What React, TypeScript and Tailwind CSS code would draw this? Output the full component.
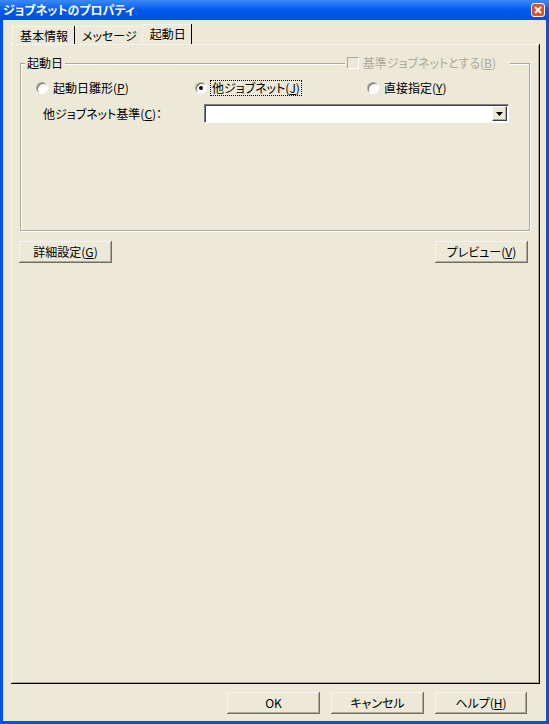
import React from 'react'

const font = { fontFamily: '"Noto Sans CJK JP", "Liberation Sans", sans-serif' }

const Radio: React.FC<{ checked?: boolean }> = ({ checked }) => (
  <span className="relative flex h-[12px] w-[12px] shrink-0 items-center justify-center rounded-full border border-t-[#ACA899] border-l-[#ACA899] border-b-white border-r-white bg-white shadow-[inset_1px_1px_0_#716F64]">
    {checked && <span className="h-[4px] w-[4px] rounded-full bg-black" />}
  </span>
)

const Btn: React.FC<{ label: string; u: string; w?: string }> = ({ label, u, w }) => (
  <div className={`flex h-[22px] ${w ?? 'w-[93px]'} border-b border-r border-b-[#716F64] border-r-[#716F64] bg-[#ECE9D8]`}>
    <div className="flex flex-1 items-center justify-center border-t border-l border-dotted border-t-white border-l-white border-b-0 border-r-0 shadow-[inset_-1px_-1px_0_#ACA899]">
      <span className="text-[12px] leading-[14px] text-black">
        {label}
        {u && (
          <>
            (<span className="underline">{u}</span>)
          </>
        )}
      </span>
    </div>
  </div>
)

const App: React.FC = () => {
  return (
    <div className="flex h-[724px] w-[549px] flex-col bg-[#0A4FDF] [font-feature-settings:'palt']" style={font}>
      {/* Title bar */}
      <div className="flex h-[20px] items-center justify-between bg-linear-to-b from-[#3B8AF7] via-[#0058EE] to-[#0050E0] pl-[3px] pr-[4px]">
        <span className="text-[12px] font-bold leading-[14px] text-white">ジョブネットのプロパティ</span>
        <div className="flex h-[14px] w-[14px] shrink-0 items-center justify-center rounded-[3px] border border-white bg-[#E0512A]">
          <svg width="8" height="8" viewBox="0 0 8 8">
            <path d="M1 1 L7 7 M7 1 L1 7" stroke="white" strokeWidth="2" />
          </svg>
        </div>
      </div>

      {/* Body */}
      <div className="mx-[3px] mb-[3px] flex flex-1 flex-col bg-[#ECE9D8]">
        {/* Tabs */}
        <div className="ml-[9px] mt-[4px] flex h-[20px] items-end">
          <div className="flex h-[18px] items-center border-t border-l border-dotted border-t-white border-l-white pl-[7px] pr-[6px]">
            <span className="text-[12px] leading-[14px] text-black">基本情報</span>
          </div>
          <div className="h-[18px] w-px bg-black" />
          <div className="flex h-[18px] items-center border-t border-r border-dotted border-t-white border-r-white pl-[7px] pr-[5px]">
            <span className="text-[12px] leading-[14px] text-black">メッセージ</span>
          </div>
          <div className="flex h-[20px] items-start border-t border-dotted border-t-white pl-[7px] pr-[5px] pt-[2px]">
            <span className="text-[12px] leading-[14px] text-black">起動日</span>
          </div>
          <div className="h-[20px] w-px bg-black" />
        </div>

        {/* Tab panel */}
        <div className="ml-[8px] flex h-[640px] w-[529px] border-b border-r border-black shadow-[inset_-1px_-1px_0_#ACA899]">
          <div className="flex flex-1 flex-col border-t border-l border-dotted border-t-white border-l-white">
            {/* Group box */}
            <div className="relative ml-[8px] mt-[18px] h-[168px] w-[510px] border border-[#ACA899] shadow-[inset_1px_1px_0_#fff,1px_1px_0_#fff]">
              <span className="absolute left-[4px] top-[-8px] bg-[#ECE9D8] px-[2px] text-[12px] leading-[14px] text-black">起動日</span>
              <div className="absolute right-[19px] top-[-8px] flex items-center gap-[4px] bg-[#ECE9D8] pl-[2px] pr-[14px]">
                <span className="h-[12px] w-[12px] border border-t-[#ACA899] border-l-[#ACA899] border-b-white border-r-white" />
                <span className="text-[12px] leading-[14px] text-[#ACA899]">
                  基準ジョブネットとする(<span className="underline">B</span>)
                </span>
              </div>

              <div className="flex pl-[15px] pt-[16px]">
                <div className="flex w-[159px] items-center gap-[5px]">
                  <Radio />
                  <span className="text-[12px] leading-[14px] text-black">
                    起動日雛形(<span className="underline">P</span>)
                  </span>
                </div>
                <div className="flex w-[172px] items-center gap-[3px]">
                  <Radio checked />
                  <span className="border border-dotted border-black px-[1px] text-[12px] leading-[14px] text-black">
                    他ジョブネット(<span className="underline">J</span>)
                  </span>
                </div>
                <div className="flex items-center gap-[5px]">
                  <Radio />
                  <span className="text-[12px] leading-[14px] text-black">
                    直接指定(<span className="underline">Y</span>)
                  </span>
                </div>
              </div>

              <div className="mt-[8px] flex items-center pl-[22px]">
                <span className="w-[161px] text-[12px] leading-[14px] text-black">
                  他ジョブネット基準(<span className="underline">C</span>)：
                </span>
                <div className="flex h-[19px] w-[305px] items-center justify-end border border-t-[#808080] border-l-[#808080] border-b-white border-r-white bg-white pr-[1px] shadow-[inset_1px_1px_0_#404040]">
                  <div className="flex h-[15px] w-[15px] items-center justify-center border border-t-white border-l-white border-b-[#404040] border-r-[#404040] bg-[#ECE9D8] shadow-[inset_-1px_-1px_0_#ACA899]">
                    <svg width="7" height="4" viewBox="0 0 7 4">
                      <path d="M0 0 H7 L3.5 4 Z" fill="black" />
                    </svg>
                  </div>
                </div>
              </div>
            </div>

            {/* Panel buttons */}
            <div className="ml-[7px] mr-[11px] mt-[10px] flex justify-between">
              <Btn label="詳細設定" u="G" />
              <Btn label="プレビュー" u="V" />
            </div>
          </div>
        </div>

        {/* Dialog buttons */}
        <div className="mt-auto flex justify-end gap-[11px] pb-[7px] pr-[19px]">
          <Btn label="OK" u="" />
          <Btn label="キャンセル" u="" />
          <Btn label="ヘルプ" u="H" w="w-[92px]" />
        </div>
      </div>
    </div>
  )
}

export default App
